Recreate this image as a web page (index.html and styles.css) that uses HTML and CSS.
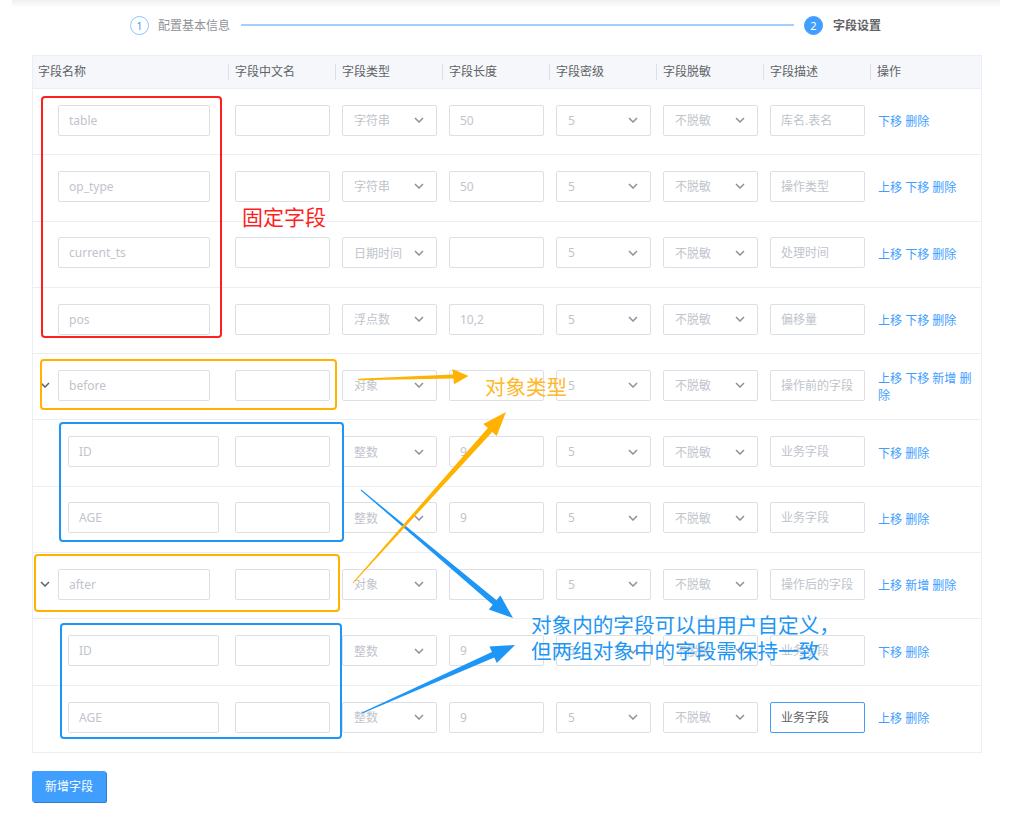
FILE: index.html
```html
<!DOCTYPE html>
<html lang="zh-CN">
<head>
    <meta charset="UTF-8">
    <title>字段设置</title>
    <link rel="stylesheet" href="styles.css">
</head>
<body>
<div class="page">
    <div class="top-bar"></div>

    <div class="steps">
        <span class="step-num">1</span>
        <span class="step-title">配置基本信息</span>
        <span class="step-line"></span>
        <span class="step-num active">2</span>
        <span class="step-title active">字段设置</span>
    </div>

    <div class="grid">
        <div class="row head">
            <div class="th">字段名称</div>
            <div class="th">字段中文名</div>
            <div class="th">字段类型</div>
            <div class="th">字段长度</div>
            <div class="th">字段密级</div>
            <div class="th">字段脱敏</div>
            <div class="th">字段描述</div>
            <div class="th">操作</div>
        </div>

        <div class="row">
            <div class="cell name"><input class="ipt" placeholder="table"></div>
            <div class="cell"><input class="ipt"></div>
            <div class="cell"><div class="sel">字符串<svg viewBox="0 0 10 6"><path d="M1 1l4 4 4-4"/></svg></div></div>
            <div class="cell"><input class="ipt" value="50"></div>
            <div class="cell"><div class="sel">5<svg viewBox="0 0 10 6"><path d="M1 1l4 4 4-4"/></svg></div></div>
            <div class="cell"><div class="sel">不脱敏<svg viewBox="0 0 10 6"><path d="M1 1l4 4 4-4"/></svg></div></div>
            <div class="cell"><input class="ipt" placeholder="库名.表名"></div>
            <div class="cell ops"><a href="#">下移</a> <a href="#">删除</a></div>
        </div>

        <div class="row">
            <div class="cell name"><input class="ipt" placeholder="op_type"></div>
            <div class="cell"><input class="ipt"></div>
            <div class="cell"><div class="sel">字符串<svg viewBox="0 0 10 6"><path d="M1 1l4 4 4-4"/></svg></div></div>
            <div class="cell"><input class="ipt" value="50"></div>
            <div class="cell"><div class="sel">5<svg viewBox="0 0 10 6"><path d="M1 1l4 4 4-4"/></svg></div></div>
            <div class="cell"><div class="sel">不脱敏<svg viewBox="0 0 10 6"><path d="M1 1l4 4 4-4"/></svg></div></div>
            <div class="cell"><input class="ipt" placeholder="操作类型"></div>
            <div class="cell ops"><a href="#">上移</a> <a href="#">下移</a> <a href="#">删除</a></div>
        </div>

        <div class="row">
            <div class="cell name"><input class="ipt" placeholder="current_ts"></div>
            <div class="cell"><input class="ipt"></div>
            <div class="cell"><div class="sel">日期时间<svg viewBox="0 0 10 6"><path d="M1 1l4 4 4-4"/></svg></div></div>
            <div class="cell"><input class="ipt"></div>
            <div class="cell"><div class="sel">5<svg viewBox="0 0 10 6"><path d="M1 1l4 4 4-4"/></svg></div></div>
            <div class="cell"><div class="sel">不脱敏<svg viewBox="0 0 10 6"><path d="M1 1l4 4 4-4"/></svg></div></div>
            <div class="cell"><input class="ipt" placeholder="处理时间"></div>
            <div class="cell ops"><a href="#">上移</a> <a href="#">下移</a> <a href="#">删除</a></div>
        </div>

        <div class="row">
            <div class="cell name"><input class="ipt" placeholder="pos"></div>
            <div class="cell"><input class="ipt"></div>
            <div class="cell"><div class="sel">浮点数<svg viewBox="0 0 10 6"><path d="M1 1l4 4 4-4"/></svg></div></div>
            <div class="cell"><input class="ipt" value="10,2"></div>
            <div class="cell"><div class="sel">5<svg viewBox="0 0 10 6"><path d="M1 1l4 4 4-4"/></svg></div></div>
            <div class="cell"><div class="sel">不脱敏<svg viewBox="0 0 10 6"><path d="M1 1l4 4 4-4"/></svg></div></div>
            <div class="cell"><input class="ipt" placeholder="偏移量"></div>
            <div class="cell ops"><a href="#">上移</a> <a href="#">下移</a> <a href="#">删除</a></div>
        </div>

        <div class="row">
            <div class="cell name obj"><svg class="fold" viewBox="0 0 10 6"><path d="M1 1l4 4 4-4"/></svg><input class="ipt" placeholder="before"></div>
            <div class="cell"><input class="ipt"></div>
            <div class="cell"><div class="sel">对象<svg viewBox="0 0 10 6"><path d="M1 1l4 4 4-4"/></svg></div></div>
            <div class="cell"><input class="ipt"></div>
            <div class="cell"><div class="sel">5<svg viewBox="0 0 10 6"><path d="M1 1l4 4 4-4"/></svg></div></div>
            <div class="cell"><div class="sel">不脱敏<svg viewBox="0 0 10 6"><path d="M1 1l4 4 4-4"/></svg></div></div>
            <div class="cell"><input class="ipt" placeholder="操作前的字段"></div>
            <div class="cell ops"><a href="#">上移</a> <a href="#">下移</a> <a href="#">新增</a> <a href="#">删除</a></div>
        </div>

        <div class="row">
            <div class="cell name child"><input class="ipt" placeholder="ID"></div>
            <div class="cell"><input class="ipt"></div>
            <div class="cell"><div class="sel">整数<svg viewBox="0 0 10 6"><path d="M1 1l4 4 4-4"/></svg></div></div>
            <div class="cell"><input class="ipt" value="9"></div>
            <div class="cell"><div class="sel">5<svg viewBox="0 0 10 6"><path d="M1 1l4 4 4-4"/></svg></div></div>
            <div class="cell"><div class="sel">不脱敏<svg viewBox="0 0 10 6"><path d="M1 1l4 4 4-4"/></svg></div></div>
            <div class="cell"><input class="ipt" placeholder="业务字段"></div>
            <div class="cell ops"><a href="#">下移</a> <a href="#">删除</a></div>
        </div>

        <div class="row">
            <div class="cell name child"><input class="ipt" placeholder="AGE"></div>
            <div class="cell"><input class="ipt"></div>
            <div class="cell"><div class="sel">整数<svg viewBox="0 0 10 6"><path d="M1 1l4 4 4-4"/></svg></div></div>
            <div class="cell"><input class="ipt" value="9"></div>
            <div class="cell"><div class="sel">5<svg viewBox="0 0 10 6"><path d="M1 1l4 4 4-4"/></svg></div></div>
            <div class="cell"><div class="sel">不脱敏<svg viewBox="0 0 10 6"><path d="M1 1l4 4 4-4"/></svg></div></div>
            <div class="cell"><input class="ipt" placeholder="业务字段"></div>
            <div class="cell ops"><a href="#">上移</a> <a href="#">删除</a></div>
        </div>

        <div class="row">
            <div class="cell name obj"><svg class="fold" viewBox="0 0 10 6"><path d="M1 1l4 4 4-4"/></svg><input class="ipt" placeholder="after"></div>
            <div class="cell"><input class="ipt"></div>
            <div class="cell"><div class="sel">对象<svg viewBox="0 0 10 6"><path d="M1 1l4 4 4-4"/></svg></div></div>
            <div class="cell"><input class="ipt"></div>
            <div class="cell"><div class="sel">5<svg viewBox="0 0 10 6"><path d="M1 1l4 4 4-4"/></svg></div></div>
            <div class="cell"><div class="sel">不脱敏<svg viewBox="0 0 10 6"><path d="M1 1l4 4 4-4"/></svg></div></div>
            <div class="cell"><input class="ipt" placeholder="操作后的字段"></div>
            <div class="cell ops"><a href="#">上移</a> <a href="#">新增</a> <a href="#">删除</a></div>
        </div>

        <div class="row">
            <div class="cell name child"><input class="ipt" placeholder="ID"></div>
            <div class="cell"><input class="ipt"></div>
            <div class="cell"><div class="sel">整数<svg viewBox="0 0 10 6"><path d="M1 1l4 4 4-4"/></svg></div></div>
            <div class="cell"><input class="ipt" value="9"></div>
            <div class="cell"><div class="sel">5<svg viewBox="0 0 10 6"><path d="M1 1l4 4 4-4"/></svg></div></div>
            <div class="cell"><div class="sel">不脱敏<svg viewBox="0 0 10 6"><path d="M1 1l4 4 4-4"/></svg></div></div>
            <div class="cell"><input class="ipt" placeholder="业务字段"></div>
            <div class="cell ops"><a href="#">下移</a> <a href="#">删除</a></div>
        </div>

        <div class="row">
            <div class="cell name child"><input class="ipt" placeholder="AGE"></div>
            <div class="cell"><input class="ipt"></div>
            <div class="cell"><div class="sel">整数<svg viewBox="0 0 10 6"><path d="M1 1l4 4 4-4"/></svg></div></div>
            <div class="cell"><input class="ipt" value="9"></div>
            <div class="cell"><div class="sel">5<svg viewBox="0 0 10 6"><path d="M1 1l4 4 4-4"/></svg></div></div>
            <div class="cell"><div class="sel">不脱敏<svg viewBox="0 0 10 6"><path d="M1 1l4 4 4-4"/></svg></div></div>
            <div class="cell"><input class="ipt focus" value="业务字段"></div>
            <div class="cell ops"><a href="#">上移</a> <a href="#">删除</a></div>
        </div>
    </div>

    <button class="btn">新增字段</button>

    <!-- annotations drawn over the screenshot -->
    <svg class="marks" viewBox="0 0 1022 818">
        <rect x="42" y="97" width="179" height="240" rx="3" class="m-red"/>
        <rect x="41" y="360" width="295" height="49" rx="3" class="m-yellow"/>
        <rect x="60" y="423" width="283" height="118" rx="3" class="m-blue"/>
        <rect x="35" y="555" width="304" height="56" rx="3" class="m-yellow"/>
        <rect x="61" y="624" width="280" height="114" rx="3" class="m-blue"/>

        <polygon class="a-blue" points="361.3,489.6 496.5,600.2 500.4,595.6 513,618 488.8,609.4 492.7,604.8 360.7,490.4"/>
        <polygon class="a-blue" points="361.8,712.5 491.9,652 489.5,646.5 515,645 496.8,662.9 494.3,657.4 362.2,713.5"/>
        <polygon class="a-yellow" points="358,378.8 453,374.6 452.5,369 468.5,376 454,384.3 453.5,378.6 358.3,380.2"/>
        <polygon class="a-yellow" points="352.6,582.7 487.8,427.9 483.3,423.9 506,412 496.7,435.9 492.2,431.9 353.4,583.3"/>
    </svg>
    <div class="note red">固定字段</div>
    <div class="note yellow">对象类型</div>
    <div class="note blue">对象内的字段可以由用户自定义，<br>但两组对象中的字段需保持一致</div>
</div>
</body>
</html>
```

FILE: styles.css
```css
body {
    margin: 0;
    font-family: "Noto Sans", "Noto Sans CJK SC", sans-serif;
    font-size: 12px;
    color: #606266;
    background: #fff;
}

.page {
    position: relative;
    width: 1022px;
    height: 818px;
    overflow: hidden;
}

.top-bar {
    height: 6px;
    margin: 0 22px 0 12px;
    background: linear-gradient(#eff0f2, #fafbfc);
}

/* steps */
.steps {
    display: flex;
    align-items: center;
    height: 20px;
    margin-top: 9px;
    padding-left: 130px;
}

.step-num {
    display: flex;
    align-items: center;
    justify-content: center;
    width: 17px;
    height: 17px;
    border: 1.5px solid #8cc5ff;
    border-radius: 50%;
    color: #409eff;
    font-size: 11px;
}

.step-num.active {
    background: #409eff;
    border-color: #409eff;
    color: #fff;
}

.step-title {
    margin-left: 9px;
    color: #909399;
}

.step-title.active {
    margin-left: 10px;
    color: #606266;
    font-weight: 600;
}

.step-line {
    width: 553px;
    height: 2px;
    margin: 0 10px 0 11px;
    background: #a6d0fb;
}

/* table */
.grid {
    width: 950px;
    margin: 20px 0 0 32px;
    border: 1px solid #ebeef5;
    box-sizing: border-box;
}

.row {
    display: grid;
    grid-template-columns: 195px repeat(6, 107px) 111px;
    align-items: center;
    height: 66.3px;
    border-bottom: 1px solid #ebeef5;
    box-sizing: border-box;
}

.row:last-child {
    border-bottom: 0;
}

.row.head {
    height: 33px;
    background: #f5f7fa;
}

.th {
    padding-left: 6px;
    line-height: 16px;
    border-left: 1px solid #dcdfe6;
}

.th:first-child {
    padding-left: 5px;
    border-left: 0;
}

.cell {
    display: flex;
    align-items: center;
    padding-left: 7px;
    margin-bottom: 3px;
}

.cell.name {
    padding-left: 25px;
}

.cell.name.child {
    padding-left: 35px;
}

.cell.name.obj {
    padding-left: 7px;
}

.fold {
    width: 10px;
    height: 6px;
    margin-right: 8px;
    fill: none;
    stroke: #606266;
    stroke-width: 1.5;
}

.ipt {
    width: 95px;
    height: 31px;
    box-sizing: border-box;
    padding: 0 10px;
    border: 1px solid #dcdfe6;
    border-radius: 2px;
    font: inherit;
    color: #c0c4cc;
    outline: none;
}

.ipt::placeholder {
    color: #c0c4cc;
}

.ipt.focus {
    border-color: #409eff;
    color: #606266;
}

.name .ipt {
    width: 152px;
}

.name.child .ipt {
    width: 151px;
}

.sel {
    display: flex;
    align-items: center;
    justify-content: space-between;
    width: 95px;
    height: 31px;
    box-sizing: border-box;
    padding: 0 12px 0 11px;
    border: 1px solid #dcdfe6;
    border-radius: 2px;
    color: #c0c4cc;
}

.sel svg {
    width: 10px;
    height: 6px;
    fill: none;
    stroke: #8d9199;
    stroke-width: 1.5;
}

.ops {
    display: block;
    padding: 0 6px 0 8px;
    margin-bottom: 0;
    line-height: 17px;
}

.ops a {
    color: #409eff;
    text-decoration: none;
}

.btn {
    display: block;
    width: 74px;
    height: 31px;
    margin: 18px 0 0 32px;
    padding: 0;
    border: 0;
    border-radius: 2px;
    background: #409eff;
    box-shadow: 1px 1px 0 #2f7fd0;
    color: #fff;
    font: inherit;
}

/* annotations */
.marks {
    position: absolute;
    top: 0;
    left: 0;
    width: 1022px;
    height: 818px;
    pointer-events: none;
}

.m-red, .m-yellow, .m-blue {
    fill: none;
    stroke-width: 2;
}

.m-red { stroke: #ff1f1f; }
.m-yellow { stroke: #ffb300; }
.m-blue { stroke: #1e96f5; }
.a-yellow { fill: #ffb300; }
.a-blue { fill: #1e96f5; }

.note {
    position: absolute;
    font-family: "Noto Sans CJK SC", sans-serif;
    white-space: nowrap;
}

.note.red {
    left: 242px;
    top: 204px;
    font-size: 21px;
    line-height: 24px;
    color: #ff1f1f;
}

.note.yellow {
    left: 485px;
    top: 374px;
    font-size: 20.5px;
    line-height: 24px;
    color: #ffb829;
}

.note.blue {
    left: 531px;
    top: 611px;
    font-size: 20.6px;
    line-height: 26px;
    color: #2196f3;
}
```
